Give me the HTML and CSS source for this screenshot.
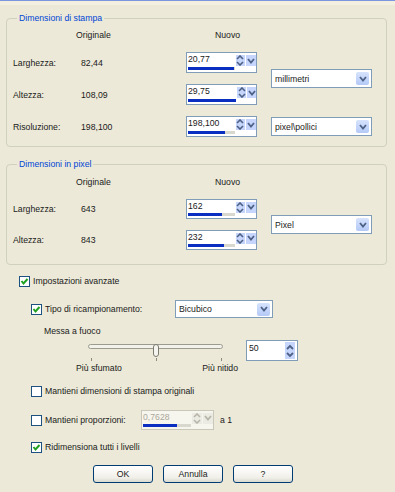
FILE: index.html
```html
<!DOCTYPE html>
<html lang="it">
<head>
    <meta charset="UTF-8">
    <title>Ridimensiona</title>
    <link rel="stylesheet" href="styles.css">
</head>
<body>

    <div class="topline"></div>

    <fieldset class="group group-print">
        <legend>Dimensioni di stampa</legend>
        <div class="grid grid-print">
            <span></span>
            <span class="head orig">Originale</span>
            <span class="head new">Nuovo</span>
            <span></span>

            <span class="lbl">Larghezza:</span>
            <span class="val">82,44</span>
            <div class="spin">
                <div class="spin-field"><span class="spin-text">20,77</span><div class="spin-bar"><div class="spin-fill" style="width:46px"></div></div></div>
                <span class="spin-ud"><svg width="8" height="11" viewBox="0 0 8 11"><path d="M1 4 L4 1 L7 4 M1 7 L4 10 L7 7" fill="none" stroke="#4d6185" stroke-width="1.6"/></svg></span>
                <span class="spin-dd"><svg width="8" height="6" viewBox="0 0 8 6"><path d="M1 1 L4 4.5 L7 1" fill="none" stroke="#4d6185" stroke-width="1.8"/></svg></span>
            </div>
            <div class="select sel-mm">
                <span class="select-text">millimetri</span>
                <span class="select-btn"><svg width="8" height="6" viewBox="0 0 8 6"><path d="M1 1 L4 4.5 L7 1" fill="none" stroke="#4d6185" stroke-width="1.8"/></svg></span>
            </div>

            <span class="lbl">Altezza:</span>
            <span class="val">108,09</span>
            <div class="spin">
                <div class="spin-field"><span class="spin-text">29,75</span><div class="spin-bar"><div class="spin-fill" style="width:48px"></div></div></div>
                <span class="spin-ud"><svg width="8" height="11" viewBox="0 0 8 11"><path d="M1 4 L4 1 L7 4 M1 7 L4 10 L7 7" fill="none" stroke="#4d6185" stroke-width="1.6"/></svg></span>
                <span class="spin-dd"><svg width="8" height="6" viewBox="0 0 8 6"><path d="M1 1 L4 4.5 L7 1" fill="none" stroke="#4d6185" stroke-width="1.8"/></svg></span>
            </div>

            <span class="lbl">Risoluzione:</span>
            <span class="val">198,100</span>
            <div class="spin">
                <div class="spin-field"><span class="spin-text">198,100</span><div class="spin-bar"><div class="spin-fill" style="width:37px"></div></div></div>
                <span class="spin-ud"><svg width="8" height="11" viewBox="0 0 8 11"><path d="M1 4 L4 1 L7 4 M1 7 L4 10 L7 7" fill="none" stroke="#4d6185" stroke-width="1.6"/></svg></span>
                <span class="spin-dd"><svg width="8" height="6" viewBox="0 0 8 6"><path d="M1 1 L4 4.5 L7 1" fill="none" stroke="#4d6185" stroke-width="1.8"/></svg></span>
            </div>
            <div class="select sel-res">
                <span class="select-text">pixel\pollici</span>
                <span class="select-btn"><svg width="8" height="6" viewBox="0 0 8 6"><path d="M1 1 L4 4.5 L7 1" fill="none" stroke="#4d6185" stroke-width="1.8"/></svg></span>
            </div>
        </div>
    </fieldset>

    <fieldset class="group group-pixel">
        <legend>Dimensioni in pixel</legend>
        <div class="grid grid-pixel">
            <span></span>
            <span class="head orig">Originale</span>
            <span class="head new">Nuovo</span>
            <span></span>

            <span class="lbl">Larghezza:</span>
            <span class="val">643</span>
            <div class="spin">
                <div class="spin-field"><span class="spin-text">162</span><div class="spin-bar"><div class="spin-fill" style="width:34px"></div></div></div>
                <span class="spin-ud"><svg width="8" height="11" viewBox="0 0 8 11"><path d="M1 4 L4 1 L7 4 M1 7 L4 10 L7 7" fill="none" stroke="#4d6185" stroke-width="1.6"/></svg></span>
                <span class="spin-dd"><svg width="8" height="6" viewBox="0 0 8 6"><path d="M1 1 L4 4.5 L7 1" fill="none" stroke="#4d6185" stroke-width="1.8"/></svg></span>
            </div>
            <div class="select sel-px">
                <span class="select-text">Pixel</span>
                <span class="select-btn"><svg width="8" height="6" viewBox="0 0 8 6"><path d="M1 1 L4 4.5 L7 1" fill="none" stroke="#4d6185" stroke-width="1.8"/></svg></span>
            </div>

            <span class="lbl">Altezza:</span>
            <span class="val">843</span>
            <div class="spin">
                <div class="spin-field"><span class="spin-text">232</span><div class="spin-bar"><div class="spin-fill" style="width:36px"></div></div></div>
                <span class="spin-ud"><svg width="8" height="11" viewBox="0 0 8 11"><path d="M1 4 L4 1 L7 4 M1 7 L4 10 L7 7" fill="none" stroke="#4d6185" stroke-width="1.6"/></svg></span>
                <span class="spin-dd"><svg width="8" height="6" viewBox="0 0 8 6"><path d="M1 1 L4 4.5 L7 1" fill="none" stroke="#4d6185" stroke-width="1.8"/></svg></span>
            </div>
        </div>
    </fieldset>

    <div class="options">
        <label class="check row-adv">
            <span class="box"><svg width="9" height="9" viewBox="0 0 9 9"><path d="M1.5 4 L3.5 6.5 L7.5 2" fill="none" stroke="#21a121" stroke-width="2"/></svg></span>
            Impostazioni avanzate
        </label>

        <div class="row-resample">
            <label class="check">
                <span class="box"><svg width="9" height="9" viewBox="0 0 9 9"><path d="M1.5 4 L3.5 6.5 L7.5 2" fill="none" stroke="#21a121" stroke-width="2"/></svg></span>
                Tipo di ricampionamento:
            </label>
            <div class="select sel-bicubic">
                <span class="select-text">Bicubico</span>
                <span class="select-btn"><svg width="8" height="6" viewBox="0 0 8 6"><path d="M1 1 L4 4.5 L7 1" fill="none" stroke="#4d6185" stroke-width="1.8"/></svg></span>
            </div>
        </div>

        <div class="focus-label">Messa a fuoco</div>

        <div class="row-slider">
            <div class="slider">
                <div class="track-area">
                    <div class="track"></div>
                    <div class="thumb"></div>
                </div>
                <div class="ticks"><span></span><span></span><span></span></div>
                <div class="slider-labels">
                    <span>Più sfumato</span>
                    <span>Più nitido</span>
                </div>
            </div>
            <div class="num">
                <span class="num-text">50</span>
                <span class="num-ud"><svg width="8" height="14" viewBox="0 0 8 14"><path d="M1 5 L4 2 L7 5 M1 9 L4 12 L7 9" fill="none" stroke="#4d6185" stroke-width="1.8"/></svg></span>
            </div>
        </div>

        <label class="check row-keepdim">
            <span class="box"></span>
            Mantieni dimensioni di stampa originali
        </label>

        <div class="row-ratio">
            <label class="check">
                <span class="box"></span>
                Mantieni proporzioni:
            </label>
            <div class="spin spin-off">
                <div class="spin-field"><span class="spin-text">0,7628</span><div class="spin-bar"><div class="spin-fill" style="width:34px"></div></div></div>
                <span class="spin-ud"><svg width="8" height="11" viewBox="0 0 8 11"><path d="M1 4 L4 1 L7 4 M1 7 L4 10 L7 7" fill="none" stroke="#b8b6aa" stroke-width="1.6"/></svg></span>
                <span class="spin-dd"><svg width="8" height="6" viewBox="0 0 8 6"><path d="M1 1 L4 4.5 L7 1" fill="none" stroke="#b8b6aa" stroke-width="1.8"/></svg></span>
            </div>
            <span class="ratio-to">a 1</span>
        </div>

        <label class="check row-layers">
            <span class="box"><svg width="9" height="9" viewBox="0 0 9 9"><path d="M1.5 4 L3.5 6.5 L7.5 2" fill="none" stroke="#21a121" stroke-width="2"/></svg></span>
            Ridimensiona tutti i livelli
        </label>
    </div>

    <div class="buttons">
        <button>OK</button>
        <button>Annulla</button>
        <button>?</button>
    </div>

</body>
</html>
```

FILE: styles.css
```css
body {
    margin: 0;
    background-color: #ece9d8;
    font-family: "Liberation Sans", Arial, sans-serif;
    font-size: 8.7px;
    color: #1a1a1a;
    width: 395px;
    height: 492px;
    overflow: hidden;
}
.topline {
    height: 4px;
    border-top: 1px solid #7a96df;
    background-color: #f3f0e2;
}

/* group boxes */
.group {
    border: 1px solid #d0d0bf;
    border-radius: 4px;
    margin: 7px 8px 0 6px;
    padding: 5px 0 9px 6px;
    min-width: 0;
}
.group legend {
    color: #0046d5;
    padding: 0 2px;
    margin-left: 4px;
    line-height: 12px;
}
.group-pixel {
    margin-top: 11px;
    padding-bottom: 14px;
}
.grid {
    display: grid;
    grid-template-columns: 67px 106px 85px 100px;
    align-items: center;
}
.grid-print {
    grid-template-rows: 12px 21px 21px 21px;
    row-gap: 11px;
}
.grid-pixel {
    grid-template-rows: 13px 20px 20px;
    row-gap: 11px;
}
.head {
    line-height: 12px;
}
.orig {
    margin-left: -4px;
}
.new {
    margin-left: 29px;
}
.val {
    margin-left: 1px;
}
.sel-mm {
    grid-column: 4;
    grid-row: 2 / span 2;
}
.sel-res {
    grid-column: 4;
    grid-row: 4;
}
.sel-px {
    grid-column: 4;
    grid-row: 2 / span 2;
    height: 17px;
}

/* spin edit with slider bar */
.spin {
    display: flex;
    align-items: center;
    width: 71px;
    height: 20px;
    box-sizing: border-box;
    border: 1px solid #7f9db9;
    background-color: #fff;
}
.grid-print .spin {
    height: 21px;
}
.spin-field {
    width: 48px;
    height: 100%;
    display: flex;
    flex-direction: column;
    justify-content: space-between;
    padding-left: 1px;
}
.spin-text {
    line-height: 11px;
    padding-top: 1px;
}
.spin-bar {
    height: 3px;
    margin-bottom: 2px;
    background-color: #d9d8cf;
}
.spin-fill {
    height: 3px;
    background-color: #0a2fc0;
}
.spin-ud, .spin-dd {
    display: flex;
    align-items: center;
    justify-content: center;
    width: 10px;
    height: 11px;
    margin-top: -4px;
    background-color: #c6d5fb;
}
.spin-ud {
    margin-left: 1px;
    margin-right: 1px;
}
.spin-off {
    width: 73px;
    border-color: #c9c7ba;
    background-color: #f6f5ee;
    color: #aca899;
}
.spin-off .spin-ud, .spin-off .spin-dd {
    background-color: #ebeae3;
}

/* drop-down lists */
.select {
    display: flex;
    align-items: center;
    justify-content: space-between;
    width: 101px;
    height: 19px;
    box-sizing: border-box;
    border: 1px solid #7f9db9;
    background-color: #fff;
}
.select-text {
    padding-left: 3px;
}
.select-btn {
    display: flex;
    align-items: center;
    justify-content: center;
    width: 13px;
    height: 13px;
    margin-right: 2px;
    border-radius: 2px;
    background: linear-gradient(#d6e3fd, #b4c9f7);
}

/* advanced options */
.options {
    display: flex;
    flex-direction: column;
    padding-left: 19px;
}
.check {
    display: flex;
    align-items: center;
    height: 14px;
}
.box {
    display: flex;
    align-items: center;
    justify-content: center;
    width: 11px;
    height: 11px;
    box-sizing: border-box;
    border: 1px solid #1c5180;
    background-color: #fff;
    margin-right: 3px;
}
.row-adv {
    margin-top: 9px;
}
.row-resample {
    display: flex;
    align-items: center;
    margin-top: 12px;
    padding-left: 12px;
}
.row-resample .check {
    width: 144px;
}
.sel-bicubic {
    width: 98px;
    height: 18px;
}
.focus-label {
    margin-top: 7px;
    padding-left: 25px;
    line-height: 12px;
}
.row-slider {
    display: flex;
    margin-top: 3px;
    padding-left: 57px;
}
.slider {
    width: 170px;
    flex-shrink: 0;
}
.track-area {
    position: relative;
    height: 13px;
    margin-left: 12px;
    width: 135px;
}
.track {
    margin-top: 4px;
    width: 133px;
    height: 3px;
    border: 1px solid #9d9b8f;
    border-radius: 3px;
    background-color: #f2f1ea;
}
.thumb {
    position: absolute;
    left: 65px;
    top: 0;
    width: 4px;
    height: 11px;
    border: 1px solid #7c7b72;
    border-radius: 3px;
    background-color: #f5f4ee;
}
.ticks {
    display: flex;
    justify-content: space-between;
    width: 131px;
    margin-left: 15px;
    height: 3px;
    margin-top: 1px;
}
.ticks span {
    width: 1px;
    height: 3px;
    background-color: #8d8b80;
}
.slider-labels {
    display: flex;
    justify-content: space-between;
    line-height: 12px;
    margin-top: 1px;
    padding-right: 8px;
}
.num {
    display: flex;
    justify-content: space-between;
    width: 52px;
    height: 21px;
    box-sizing: border-box;
    border: 1px solid #7f9db9;
    background-color: #fff;
}
.num-text {
    padding: 2px 0 0 2px;
    line-height: 11px;
}
.num-ud {
    display: flex;
    align-items: center;
    justify-content: center;
    width: 10px;
    margin: 1px 2px 1px 0;
    background-color: #c6d5fb;
}
.row-keepdim {
    margin-top: 10px;
    padding-left: 12px;
}
.row-ratio {
    display: flex;
    align-items: center;
    margin-top: 12px;
    padding-left: 12px;
}
.row-ratio .check {
    width: 110px;
}
.ratio-to {
    margin-left: 6px;
}
.row-layers {
    margin-top: 10px;
    padding-left: 12px;
}

/* dialog buttons */
.buttons {
    display: flex;
    gap: 10px;
    padding-left: 93px;
    margin-top: 11px;
}
button {
    width: 60px;
    height: 18px;
    padding: 0;
    font-family: "Liberation Sans", Arial, sans-serif;
    font-size: 8.7px;
    color: #1a1a1a;
    border: 1px solid #003c74;
    border-radius: 3px;
    background: linear-gradient(#ffffff, #f1f0ea 70%, #dcdbd2);
}
```
